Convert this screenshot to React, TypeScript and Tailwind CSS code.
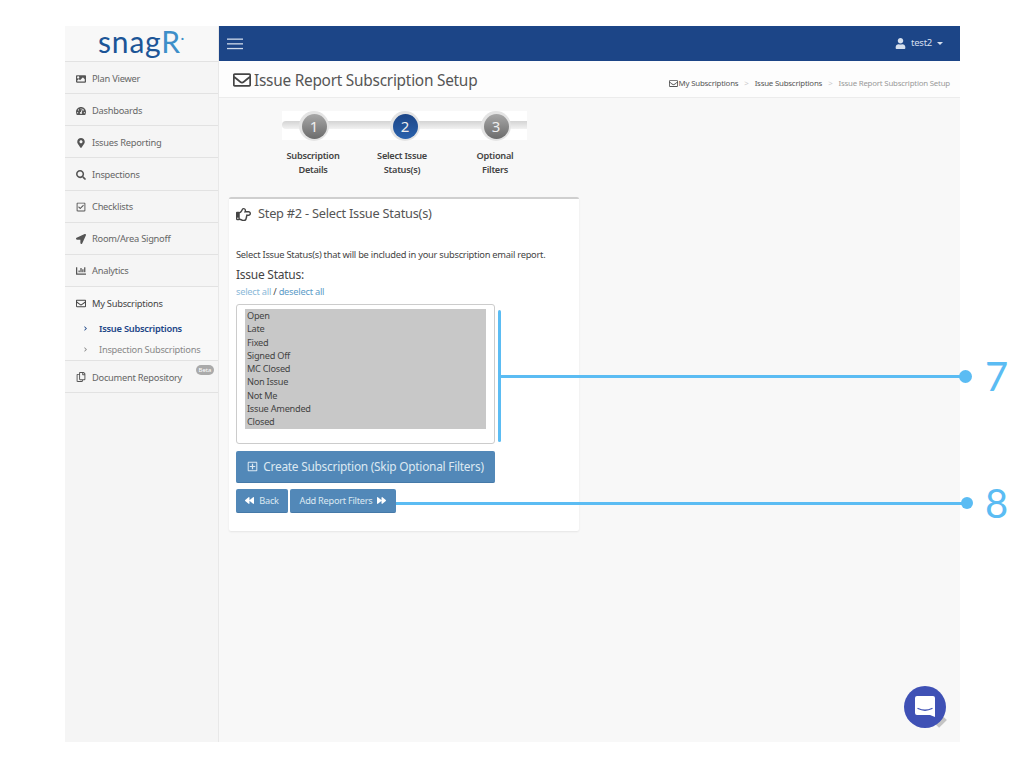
import React from "react";
import {
  FaImage, FaTachometerAlt, FaMapMarkerAlt, FaSearch, FaRegCheckSquare, FaLocationArrow, FaChartBar,
  FaRegEnvelope, FaRegCopy, FaUser, FaRegHandPointRight, FaRegPlusSquare, FaBackward, FaForward, FaChevronRight,
} from "react-icons/fa";

const nav = [
  { label: "Plan Viewer", Icon: FaImage },
  { label: "Dashboards", Icon: FaTachometerAlt },
  { label: "Issues Reporting", Icon: FaMapMarkerAlt },
  { label: "Inspections", Icon: FaSearch },
  { label: "Checklists", Icon: FaRegCheckSquare },
  { label: "Room/Area Signoff", Icon: FaLocationArrow },
  { label: "Analytics", Icon: FaChartBar },
];
const statuses = ["Open", "Late", "Fixed", "Signed Off", "MC Closed", "Non Issue", "Not Me", "Issue Amended", "Closed"];
const font = { fontFamily: '"Noto Sans", "Open Sans", sans-serif' };

function Step({ n, active }: { n: number; active?: boolean }) {
  return (
    <div className="w-[30px] h-[30px] rounded-full bg-[#e4e4e4] flex items-center justify-center">
      <div className={`w-[25px] h-[25px] rounded-full flex items-center justify-center text-[15px] text-[#eeeeee] ${active ? "bg-gradient-to-b from-[#1c4587] to-[#2a62ad]" : "bg-gradient-to-b from-[#a8a8a8] to-[#6c6c6c]"}`}>{n}</div>
    </div>
  );
}

export default function App() {
  return (
    <div className="relative w-[1024px] h-[768px] bg-white overflow-hidden tracking-[-0.25px]" style={font}>
      <div className="absolute left-[65px] top-[26px] w-[895px] h-[716px] flex">
        <aside className="w-[154px] shrink-0 bg-[#f5f5f5] border-r border-[#e8e8e8] text-[#666] text-[9.3px]">
          <div className="h-[36px] border-b border-[#e2e2e2] flex items-center justify-center bg-[#f8f8f8]">
            <span className="text-[30px] leading-none text-[#1c5597] tracking-[0.8px] -mt-[5px]" style={{ fontFamily: "Lato, sans-serif" }}>snag<span className="text-[#3d8fc9]">R</span><span className="text-[#3d8fc9] text-[12px] font-bold align-super">·</span></span>
          </div>
          {nav.map(({ label, Icon }) => (
            <div key={label} className="h-[32.15px] flex items-center pl-[11px] gap-[6px] pt-[2px] border-b border-[#e2e2e2]">
              <span className="w-[10px] flex justify-center"><Icon className="text-[10px] text-[#555]" /></span>
              <span>{label}</span>
            </div>
          ))}
          <div className="h-[74px] border-b border-[#e2e2e2] bg-[#f8f8f8] pl-[11px]">
            <div className="h-[32px] flex items-center gap-[6px] pt-[2px] text-[#444]">
              <span className="w-[10px] flex justify-center"><FaRegEnvelope className="text-[11px] text-[#444]" /></span>My Subscriptions
            </div>
            <div className="h-[21px] flex items-center gap-[11px] pl-[7px] pt-[1px] mt-[-1px] font-semibold text-[#1c4587]"><FaChevronRight className="text-[5px]" />Issue Subscriptions</div>
            <div className="h-[21px] flex items-center gap-[11px] pl-[7px] pt-[1px] text-[#888]"><FaChevronRight className="text-[5px]" />Inspection Subscriptions</div>
          </div>
          <div className="relative h-[32px] flex items-center pl-[11px] gap-[6px] pt-[2px] border-b border-[#e2e2e2]">
            <span className="w-[10px] flex justify-center"><FaRegCopy className="text-[10px] text-[#555]" /></span>Document Repository
            <span className="absolute right-[4px] top-[4px] h-[10px] w-[18px] rounded-full bg-[#aaa] text-white text-[6px] leading-[10px] text-center tracking-normal">Beta</span>
          </div>
        </aside>
        <div className="flex-1 flex flex-col bg-[#f8f8f8] min-w-0">
          <header className="h-[35px] bg-[#1c4587] flex items-center justify-between pl-[8px] pr-[17px] text-[#d5dfee]">
            <svg width="16" height="12" viewBox="0 0 16 12" fill="#cfdaea"><rect y="0.5" width="16" height="1.3" /><rect y="5.2" width="16" height="1.3" /><rect y="9.9" width="16" height="1.3" /></svg>
            <div className="flex items-center gap-[5px] text-[9.5px]"><FaUser className="text-[11px]" />test2<span className="border-x-[3px] border-x-transparent border-t-[3px] border-t-[#d5dfee]" /></div>
          </header>
          <div className="h-[37px] bg-[#fdfdfd] border-b border-[#ececec] flex items-center justify-between pl-[14px] pr-[10px]">
            <div className="flex items-center gap-[3px] mt-[3px] text-[15.4px] text-[#555]"><FaRegEnvelope className="text-[18px] text-[#444]" />Issue Report Subscription Setup</div>
            <div className="flex items-center mt-[10px] text-[7.85px] text-[#555] tracking-[-0.2px]">
              <FaRegEnvelope className="text-[9px] mr-[1px]" />My Subscriptions<span className="mx-[6px] text-[#ccc]">&gt;</span>Issue Subscriptions<span className="mx-[6px] text-[#ccc]">&gt;</span><span className="text-[#999]">Issue Report Subscription Setup</span>
            </div>
          </div>
          <main className="pl-[10px] pt-[13px]">
            <div className="ml-[53px] w-[245px] h-[29px] bg-white relative">
              <div className="absolute left-0 right-0 top-[10px] h-[8px] rounded-l-full bg-gradient-to-b from-[#d4d4d4] to-[#f2f2f2]" />
              <div className="absolute left-[17px] top-0"><Step n={1} /></div>
              <div className="absolute left-[108px] top-0"><Step n={2} active /></div>
              <div className="absolute left-[199px] top-0"><Step n={3} /></div>
            </div>
            <div className="flex ml-[44px] mt-[9px] text-[9.2px] leading-[14px] font-semibold text-[#444] text-center">
              <div className="w-[80px]">Subscription<br />Details</div>
              <div className="w-[80px] ml-[9px]">Select Issue<br />Status(s)</div>
              <div className="w-[80px] ml-[13px]">Optional<br />Filters</div>
            </div>
            <section className="mt-[20px] w-[350px] h-[334px] bg-white border-t-2 border-[#cfcfcf] rounded-[2px] shadow-[0_1px_2px_rgba(0,0,0,0.08)] px-[7px]">
              <div className="flex items-center gap-[7px] pt-[4px] h-[26px] text-[#555] text-[12.8px]"><FaRegHandPointRight className="text-[15px] text-[#444]" />Step #2 - Select Issue Status(s)</div>
              <p className="mt-[23px] text-[9.3px] leading-[14px] text-[#444]">Select Issue Status(s) that will be included in your subscription email report.</p>
              <div className="mt-[4px] text-[12px] leading-[18px] text-[#444]">Issue Status:</div>
              <div className="mt-[1px] text-[9.3px] leading-[14px] text-[#444]"><span className="text-[#8ab8d8]">select all</span> / <span className="text-[#5b9bc8]">deselect all</span></div>
              <div className="mt-[5px] w-[259px] h-[140px] bg-white border border-[#ccc] rounded-[3px] pt-[4px] pl-[8px] text-[9.2px] leading-[13.3px] text-[#444]">
                <div className="w-[241px] bg-[#c8c8c8] pl-[2px]">
                  {statuses.map((s) => <div key={s}>{s}</div>)}
                </div>
              </div>
              <button className="mt-[7px] w-[259px] h-[32px] bg-[#5288b8] rounded-[2px] text-[#dce8f2] text-[11.9px] flex items-center justify-center gap-[5px] border-b border-[#4579a8]"><FaRegPlusSquare className="text-[11px]" />Create Subscription (Skip Optional Filters)</button>
              <div className="mt-[6px] flex gap-[2px] text-[9.2px] text-[#dce8f2]">
                <button className="w-[52px] h-[24px] bg-[#5288b8] rounded-[2px] border-b border-[#4579a8] flex items-center justify-center gap-[5px]"><FaBackward className="text-[9px] text-white" />Back</button>
                <button className="w-[106px] h-[24px] bg-[#5288b8] rounded-[2px] border-b border-[#4579a8] flex items-center justify-center gap-[5px]">Add Report Filters<FaForward className="text-[9px] text-white" /></button>
              </div>
            </section>
          </main>
        </div>
      </div>

      <div className="absolute left-[935px] top-[718px] w-[11px] h-[7px] bg-[#c4c4c4] -rotate-45" />
      <div className="absolute left-[904px] top-[686px] w-[42px] h-[42px] rounded-full bg-[#3f51b5] flex items-center justify-center">
        <svg width="22" height="24" viewBox="0 0 22 24"><path d="M3 1h16a2 2 0 0 1 2 2v19l-5-2H3a2 2 0 0 1-2-2V3a2 2 0 0 1 2-2z" fill="#fff" /><path d="M4 13.5q7 3.5 14 0" fill="none" stroke="#3f51b5" strokeWidth="1.3" strokeLinecap="round" /></svg>
      </div>

      <div className="absolute left-[498px] top-[310px] w-[3px] h-[132px] bg-[#5bbcf3] rounded-full" />
      <div className="absolute left-[499px] top-[375px] w-[466px] h-[3px] bg-[#5bbcf3]" />
      <div className="absolute left-[959px] top-[370px] w-[13px] h-[13px] rounded-full bg-[#5bbcf3]" />
      <div className="absolute left-[985px] top-[352px] text-[40px] leading-[48px] font-normal text-[#5bbcf3] tracking-normal" style={{ fontFamily: "Lato, sans-serif" }}>7</div>
      <div className="absolute left-[396px] top-[502px] w-[570px] h-[3px] bg-[#5bbcf3]" />
      <div className="absolute left-[961px] top-[497px] w-[12px] h-[12px] rounded-full bg-[#5bbcf3]" />
      <div className="absolute left-[985px] top-[479px] text-[40px] leading-[48px] font-normal text-[#5bbcf3] tracking-normal" style={{ fontFamily: "Lato, sans-serif" }}>8</div>
    </div>
  );
}
